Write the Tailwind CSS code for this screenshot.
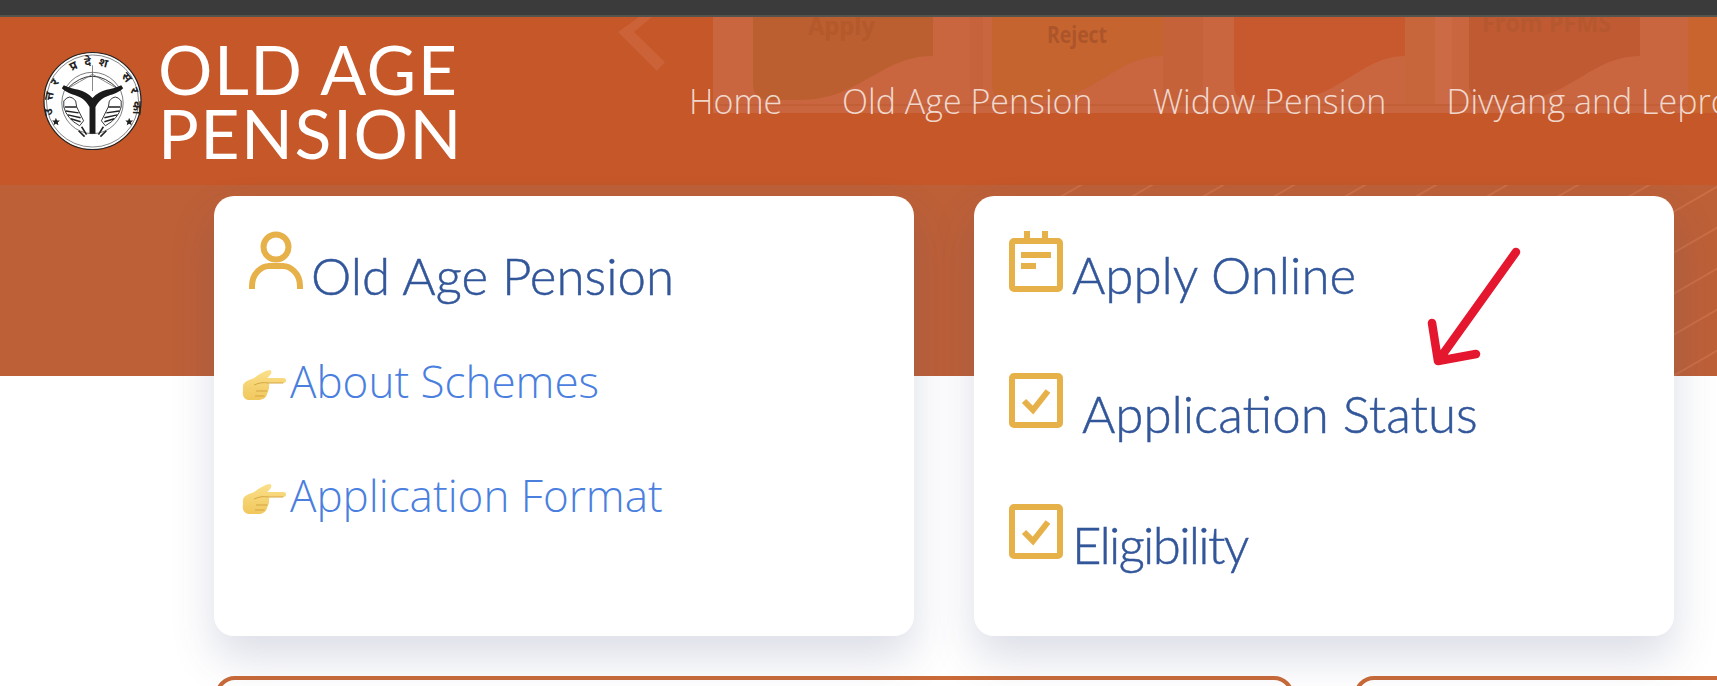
<!DOCTYPE html>
<html lang="en">
<head>
    <meta charset="UTF-8">
    <meta name="viewport" content="width=device-width, initial-scale=1.0">
    <title>Old Age Pension</title>
    <script src="https://cdn.jsdelivr.net/npm/@tailwindcss/browser@4"></script>
</head>
<body class="bg-white h-[686px] overflow-hidden font-['Open_Sans',sans-serif]">
    <div class="h-[15px] bg-[#3b3b3b]"></div>
    <div class="h-[2px] bg-[#555350]"></div>

    <!-- header, carousel picture shows faintly behind the nav -->
    <header class="relative h-[168px] bg-[#c55728] overflow-hidden">
        <svg class="absolute left-0 top-0" width="1717" height="100" viewBox="0 17 1717 100">
            <path d="M639 17L618 32L657 71L665 62L634 32L652 17Z" fill="#cc6238"/>
            <rect x="713" y="0" width="975" height="113" fill="#c96640"/>
            <rect x="1688" y="0" width="29" height="113" fill="#c9642f"/>
            <rect x="713" y="104" width="975" height="2" fill="#c25f36"/>
            <rect x="970" y="0" width="13" height="104" fill="#c7633c"/>
            <rect x="1163" y="0" width="40" height="104" fill="#c6623a"/>
            <rect x="1405" y="0" width="30" height="104" fill="#c7663a"/>
            <rect x="1435" y="0" width="17" height="104" fill="#cb6a44"/>
            <path d="M753 0H933V56C880 56 860 100 800 100H770Q753 100 753 84Z" fill="#bb5f30"/>
            <path d="M992 0H1163V56C1115 56 1095 100 1040 100H1008Q992 100 992 84Z" fill="#c66430"/>
            <path d="M1234 0H1405V56C1360 56 1340 100 1285 100H1250Q1234 100 1234 84Z" fill="#c8592e"/>
            <path d="M1469 0H1640V56C1590 56 1570 100 1515 100H1485Q1469 100 1469 84Z" fill="#bf5a33"/>
            <text x="808" y="35" textLength="67" lengthAdjust="spacingAndGlyphs" font-family="Open Sans" font-weight="700" font-size="25" fill="#b3592c">Apply</text>
            <text x="1047" y="43" textLength="60" lengthAdjust="spacingAndGlyphs" font-family="Open Sans" font-weight="700" font-size="23" fill="#ad552a">Reject</text>
            <text x="1482" y="32" textLength="129" lengthAdjust="spacingAndGlyphs" font-family="Open Sans" font-weight="700" font-size="25" fill="#b6582f">From PFMS</text>
        </svg>

        <div class="relative flex h-full items-start">
            <div class="flex items-start pt-[20px] pl-[43px] w-[689px] shrink-0">
                <svg class="mt-[14px] shrink-0" width="99" height="100" viewBox="0 0 100 100">
                    <defs><path id="sealArc" d="M10 64A41 41 0 1 1 90 64"/></defs>
                    <circle cx="50" cy="50" r="49" fill="#fff" stroke="#222" stroke-width="1.2"/>
                    <circle cx="50" cy="50" r="46.5" fill="none" stroke="#333" stroke-width=".6"/>
                    <circle cx="50" cy="52" r="31" fill="none" stroke="#444" stroke-width=".7"/>
                    <text font-family="Noto Sans,sans-serif" font-weight="700" font-size="12" fill="#222"><textPath href="#sealArc" textLength="158">उत्तर प्रदेश सरकार</textPath></text>
                    <path d="M24 38Q50 12 76 38" fill="none" stroke="#333" stroke-width="1"/>
                    <path d="M24 38L50 23L76 38M50 14V40" fill="none" stroke="#555" stroke-width=".7"/>
                    <path d="M19 37C28 46 40 42 47 56V83H53V56C60 42 72 46 81 37L79 34C70 39 58 37 50 47C42 37 30 39 21 34Z" fill="#1a1a1a"/>
                    <!-- fish on both sides of the stem -->
                    <path d="M21 50Q27 42 33 50L34 56L41 70L37 75Q24 68 21 56Z" fill="#fff" stroke="#222" stroke-width=".9"/>
                    <path d="M79 50Q73 42 67 50L66 56L59 70L63 75Q76 68 79 56Z" fill="#fff" stroke="#222" stroke-width=".9"/>
                    <path d="M22 56H34M23 60L36 62M25 64L38 67M28 68L38 71M78 56H66M77 60L64 62M75 64L62 67M72 68L62 71" fill="none" stroke="#222" stroke-width="1.5"/>
                    <path d="M39 76L44 84M61 76L56 84M36 80L42 86M64 80L58 86" fill="none" stroke="#222" stroke-width="1.6"/>
                    <path d="M13 67l1.2 2.6 2.8.2-2.1 1.9.7 2.8-2.6-1.5-2.4 1.5.6-2.8-2-1.9 2.8-.2zM87 67l1.2 2.6 2.8.2-2.1 1.9.7 2.8-2.6-1.5-2.4 1.5.6-2.8-2-1.9 2.8-.2z" fill="#222"/>
                </svg>
                <div class="ml-[16px] text-[68px] leading-[64px] text-white font-['Lato',sans-serif] tracking-[1.5px] uppercase">Old Age<br>Pension</div>
            </div>
            <nav class="flex gap-[60px] pt-[61px] text-[34px] leading-[46px] font-light text-white/75 whitespace-nowrap">
                <a>Home</a>
                <a>Old Age Pension</a>
                <a>Widow Pension</a>
                <a>Divyang and Leprosy Pension</a>
            </nav>
        </div>
    </header>

    <!-- band behind the top of the cards -->
    <div class="relative h-[191px] bg-[#bd6038] overflow-hidden">
        <svg class="absolute left-0 top-0" width="1717" height="191" viewBox="0 0 1717 191">
            <defs>
                <pattern id="stripes" width="80" height="35.5" patternUnits="userSpaceOnUse" patternTransform="translate(1675 25) rotate(-30)">
                    <rect width="80" height="1.6" fill="#cc7048"/>
                </pattern>
            </defs>
            <rect x="1060" width="657" height="191" fill="url(#stripes)"/>
        </svg>
    </div>

    <main class="relative -mt-[180px] flex gap-[60px] pl-[214px]">
        <section class="w-[700px] h-[440px] shrink-0 bg-white rounded-[20px] shadow-[0_22px_44px_rgba(60,70,120,0.18)] pl-[28px] pt-[35px]">
            <div class="flex items-end">
                <svg class="ml-[7px] shrink-0" width="54" height="58" viewBox="0 0 54 58" fill="none" stroke="#e7b14a" stroke-width="6">
                    <circle cx="27" cy="16" r="12.5"/>
                    <path d="M3 58V55C3 42 13 35 20 35H34C41 35 51 42 51 55V58"/>
                </svg>
                <h2 class="ml-[8px] -mb-[15px] text-[51px] leading-[56px] font-light [-webkit-text-stroke:0.5px_#32569a] text-[#32569a] font-['Lato',sans-serif] whitespace-nowrap">Old Age Pension</h2>
            </div>
            <ul class="mt-[62px] flex flex-col gap-[53px] text-[#4a7fe0] text-[44px] leading-[61px] font-light">
                <li class="flex items-center">
                    <svg class="shrink-0 mt-[6px] mr-[3px]" width="45" height="32" viewBox="0 0 48 32" preserveAspectRatio="none">
                        <defs><linearGradient id="hand" x1="0" y1="0" x2="0" y2="1"><stop offset="0" stop-color="#fbe08a"/><stop offset="1" stop-color="#f0c75c"/></linearGradient></defs>
                        <path d="M1 17C2 12 8 11 13 9C18 5 24 2 29 1C32 1 32 4 30 6L27 9H44C48 9 48 14 44 14H29C29 18 29 21 27 24C26 29 22 31 17 31H8C3 31 0 27 1 22Z" fill="url(#hand)"/>
                        <path d="M28 14H44M13 16C17 14 23 13 28 14M15 22H27M14 27H24" fill="none" stroke="#d4a443" stroke-width="1"/>
                    </svg>
                    <a class="whitespace-nowrap">About Schemes</a>
                </li>
                <li class="flex items-center">
                    <svg class="shrink-0 mt-[6px] mr-[3px]" width="45" height="32" viewBox="0 0 48 32" preserveAspectRatio="none">
                        <path d="M1 17C2 12 8 11 13 9C18 5 24 2 29 1C32 1 32 4 30 6L27 9H44C48 9 48 14 44 14H29C29 18 29 21 27 24C26 29 22 31 17 31H8C3 31 0 27 1 22Z" fill="url(#hand)"/>
                        <path d="M28 14H44M13 16C17 14 23 13 28 14M15 22H27M14 27H24" fill="none" stroke="#d4a443" stroke-width="1"/>
                    </svg>
                    <a class="whitespace-nowrap">Application Format</a>
                </li>
            </ul>
        </section>

        <section class="relative w-[700px] h-[440px] shrink-0 bg-white rounded-[20px] shadow-[0_22px_44px_rgba(60,70,120,0.18)] pl-[35px] pt-[35px] text-[#32569a] text-[51px] leading-[56px] font-light [-webkit-text-stroke:0.5px_#32569a] font-['Lato',sans-serif]">
            <div class="flex items-end">
                <svg class="shrink-0" width="54" height="61" viewBox="0 0 54 61" fill="none" stroke="#e7b14a" stroke-width="6">
                    <rect x="3" y="10" width="48" height="48" rx="2"/>
                    <path d="M18 0V8M36 0V8M12 24H42M12 35H27"/>
                </svg>
                <h2 class="ml-[9px] -mb-[11px] whitespace-nowrap">Apply Online</h2>
            </div>
            <div class="mt-[81px] flex items-start">
                <svg class="shrink-0" width="54" height="55" viewBox="0 0 54 55" fill="none" stroke="#e7b14a" stroke-width="6">
                    <rect x="3" y="3" width="48" height="49" rx="2"/>
                    <path d="M15 28L24 37L39 18"/>
                </svg>
                <h2 class="ml-[19px] mt-[13px] whitespace-nowrap">Application Status</h2>
            </div>
            <div class="mt-[62px] flex items-start">
                <svg class="shrink-0" width="54" height="55" viewBox="0 0 54 55" fill="none" stroke="#e7b14a" stroke-width="6">
                    <rect x="3" y="3" width="48" height="49" rx="2"/>
                    <path d="M15 28L24 37L39 18"/>
                </svg>
                <h2 class="ml-[9px] mt-[13px] whitespace-nowrap tracking-[-1.7px]">Eligibility</h2>
            </div>
            <!-- hand drawn red arrow on top of the card -->
            <svg class="absolute left-[450px] top-[45px]" width="100" height="130" viewBox="0 0 100 130" fill="none" stroke="#e5172f" stroke-width="8.5" stroke-linecap="round" stroke-linejoin="round">
                <path d="M92 11L14 120M8 82L14 120L52 113"/>
            </svg>
        </section>
    </main>

    <div class="flex gap-[60px] pl-[215px] mt-[40px]">
        <div class="w-[1079px] h-[120px] shrink-0 border-4 border-[#c96a38] rounded-[20px] bg-white"></div>
        <div class="w-[600px] h-[120px] shrink-0 border-4 border-[#c96a38] rounded-[20px] bg-white"></div>
    </div>
</body>
</html>
